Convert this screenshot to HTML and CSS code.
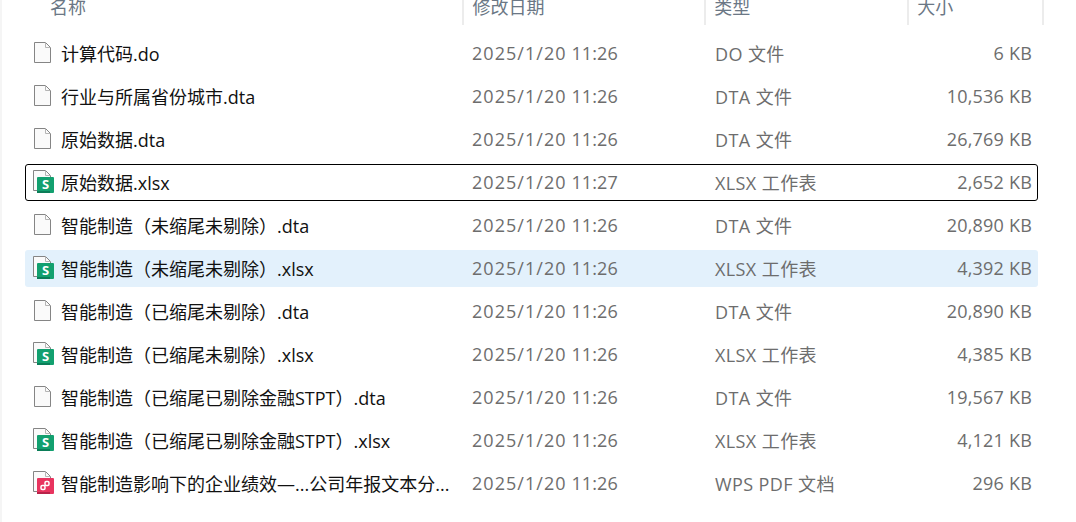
FILE: index.html
```html
<!DOCTYPE html>
<html lang="zh-CN">
<head>
  <meta charset="UTF-8">
  <title>文件列表</title>
  <link rel="stylesheet" href="styles.css">
</head>
<body>
  <svg class="defs" width="0" height="0">
    <symbol id="page" viewBox="0 0 22 24">
      <path d="M1.5 1.5h11l5 5v15h-16z" fill="#fafafa" stroke="#858585" stroke-linejoin="round"/>
      <path d="M12.5 1.5v5h5" fill="none" stroke="#b5b5b5"/>
    </symbol>
    <symbol id="sheet" viewBox="0 0 22 24">
      <path d="M.5.5h12l5 5v15H.5z" fill="#fafafa" stroke="#858585" stroke-linejoin="round"/>
      <path d="M12.5.5v5h5" fill="none" stroke="#b5b5b5"/>
      <rect x="4" y="7" width="17" height="16" rx="1" fill="#12a06f"/>
      <rect x="4" y="21" width="13" height="2" fill="#0b7d58"/>
      <text x="12.5" y="19" class="badge-letter">S</text>
    </symbol>
    <symbol id="pdf" viewBox="0 0 22 24">
      <path d="M.5.5h12l5 5v15H.5z" fill="#fafafa" stroke="#858585" stroke-linejoin="round"/>
      <path d="M12.5.5v5h5" fill="none" stroke="#b5b5b5"/>
      <rect x="4" y="7" width="17" height="16" rx="1" fill="#e8345f"/>
      <rect x="4" y="21" width="13" height="2" fill="#b8234a"/>
      <rect x="8" y="14.5" width="4" height="4" rx="1.2" fill="none" stroke="#fff" stroke-width="1.5"/>
      <rect x="12" y="10.5" width="4" height="4" rx="1.2" fill="none" stroke="#fff" stroke-width="1.5"/>
    </symbol>
  </svg>

  <div class="list">
    <div class="head">
      <div class="col-name">名称</div>
      <div class="col-date">修改日期</div>
      <div class="col-type">类型</div>
      <div class="col-size">大小</div>
    </div>

    <div class="rows">
      <div class="row">
        <div class="col-name"><svg class="icon"><use href="#page"/></svg><span class="fname">计算代码.do</span></div>
        <div class="col-date"><span class="day">2025/1/20</span> 11:26</div>
        <div class="col-type">DO 文件</div>
        <div class="col-size">6 KB</div>
      </div>
      <div class="row">
        <div class="col-name"><svg class="icon"><use href="#page"/></svg><span class="fname">行业与所属省份城市.dta</span></div>
        <div class="col-date"><span class="day">2025/1/20</span> 11:26</div>
        <div class="col-type">DTA 文件</div>
        <div class="col-size">10,536 KB</div>
      </div>
      <div class="row">
        <div class="col-name"><svg class="icon"><use href="#page"/></svg><span class="fname">原始数据.dta</span></div>
        <div class="col-date"><span class="day">2025/1/20</span> 11:26</div>
        <div class="col-type">DTA 文件</div>
        <div class="col-size">26,769 KB</div>
      </div>
      <div class="row focused">
        <div class="col-name"><svg class="icon"><use href="#sheet"/></svg><span class="fname">原始数据.xlsx</span></div>
        <div class="col-date"><span class="day">2025/1/20</span> 11:27</div>
        <div class="col-type">XLSX 工作表</div>
        <div class="col-size">2,652 KB</div>
      </div>
      <div class="row">
        <div class="col-name"><svg class="icon"><use href="#page"/></svg><span class="fname">智能制造（未缩尾未剔除）.dta</span></div>
        <div class="col-date"><span class="day">2025/1/20</span> 11:26</div>
        <div class="col-type">DTA 文件</div>
        <div class="col-size">20,890 KB</div>
      </div>
      <div class="row hovered">
        <div class="col-name"><svg class="icon"><use href="#sheet"/></svg><span class="fname">智能制造（未缩尾未剔除）.xlsx</span></div>
        <div class="col-date"><span class="day">2025/1/20</span> 11:26</div>
        <div class="col-type">XLSX 工作表</div>
        <div class="col-size">4,392 KB</div>
      </div>
      <div class="row">
        <div class="col-name"><svg class="icon"><use href="#page"/></svg><span class="fname">智能制造（已缩尾未剔除）.dta</span></div>
        <div class="col-date"><span class="day">2025/1/20</span> 11:26</div>
        <div class="col-type">DTA 文件</div>
        <div class="col-size">20,890 KB</div>
      </div>
      <div class="row">
        <div class="col-name"><svg class="icon"><use href="#sheet"/></svg><span class="fname">智能制造（已缩尾未剔除）.xlsx</span></div>
        <div class="col-date"><span class="day">2025/1/20</span> 11:26</div>
        <div class="col-type">XLSX 工作表</div>
        <div class="col-size">4,385 KB</div>
      </div>
      <div class="row">
        <div class="col-name"><svg class="icon"><use href="#page"/></svg><span class="fname">智能制造（已缩尾已剔除金融STPT）.dta</span></div>
        <div class="col-date"><span class="day">2025/1/20</span> 11:26</div>
        <div class="col-type">DTA 文件</div>
        <div class="col-size">19,567 KB</div>
      </div>
      <div class="row">
        <div class="col-name"><svg class="icon"><use href="#sheet"/></svg><span class="fname">智能制造（已缩尾已剔除金融STPT）.xlsx</span></div>
        <div class="col-date"><span class="day">2025/1/20</span> 11:26</div>
        <div class="col-type">XLSX 工作表</div>
        <div class="col-size">4,121 KB</div>
      </div>
      <div class="row">
        <div class="col-name"><svg class="icon"><use href="#pdf"/></svg><span class="fname">智能制造影响下的企业绩效—...公司年报文本分...</span></div>
        <div class="col-date"><span class="day">2025/1/20</span> 11:26</div>
        <div class="col-type">WPS PDF 文档</div>
        <div class="col-size">296 KB</div>
      </div>
    </div>
  </div>
</body>
</html>
```

FILE: styles.css
```css
html, body {
  margin: 0;
  padding: 0;
  height: 522px;
  overflow: hidden;
  background-color: #fff;
}
body {
  font-family: 'Open Sans', 'Noto Sans CJK SC', sans-serif;
  font-size: 18px;
  color: #6d6d6d;
  border-left: 2px solid #f5f5f5;
}
.defs {
  position: absolute;
}
.badge-letter {
  font-family: 'Open Sans', sans-serif;
  font-size: 13px;
  font-weight: 700;
  fill: #fff;
  text-anchor: middle;
}
.list {
  width: 1042px;
}
.head {
  display: flex;
  height: 25px;
  margin-left: 23px;
  overflow: hidden;
  line-height: 14px;
  color: #6b7785;
}
.head > div {
  box-sizing: border-box;
  border-right: 2px solid #ececec;
}
.head .col-name {
  width: 439px;
  padding-left: 25px;
}
.head .col-date {
  width: 243px;
  padding-left: 9px;
}
.head .col-type {
  width: 203px;
  padding-left: 8px;
}
.head .col-size {
  width: 135px;
  padding-left: 8px;
}
.rows {
  display: flex;
  flex-direction: column;
  gap: 6px;
  margin-top: 10px;
  margin-left: 23px;
  width: 1013px;
}
.row {
  display: flex;
  align-items: center;
  box-sizing: border-box;
  height: 37px;
  padding-bottom: 2px;
  border-radius: 3px;
}
.row.focused {
  border: 1px solid #000;
}
.row.hovered {
  background-color: #e3f1fc;
}
.row .col-name {
  display: flex;
  align-items: center;
  width: 447px;
  color: #111;
}
.icon {
  flex: none;
  width: 22px;
  height: 24px;
  margin-left: 8px;
  margin-right: 6px;
}
.row .col-date {
  width: 243px;
  letter-spacing: 0.1px;
}
.day {
  letter-spacing: 1.05px;
}
.row .col-type {
  width: 203px;
  letter-spacing: 0.4px;
}
.row .col-size {
  width: 114px;
  text-align: right;
  letter-spacing: 0.2px;
}
.row.focused > div:first-child {
  margin-left: -1px;
}
```
